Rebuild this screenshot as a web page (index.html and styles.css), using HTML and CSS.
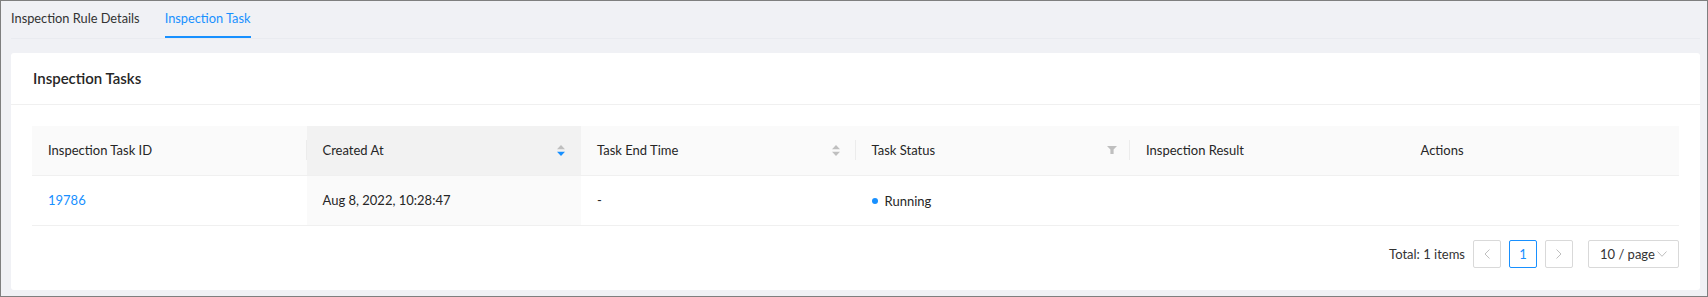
FILE: index.html
```html
<!DOCTYPE html>
<html lang="en">
<head>
  <meta charset="UTF-8" />
  <meta name="viewport" content="width=device-width, initial-scale=1.0" />
  <title>Inspection Task</title>
  <link rel="stylesheet" href="styles.css">
</head>
<body>
<div class="frame">
  <div class="tabs">
    <div class="tab">Inspection Rule Details</div>
    <div class="tab active">Inspection Task</div>
  </div>
  <div class="card">
    <div class="card-head">Inspection Tasks</div>
    <div class="card-body">
      <table class="table">
        <thead>
          <tr>
            <th class="sep">Inspection Task ID</th>
            <th class="sorted">
              <div class="th-inner">
                <span>Created At</span>
                <svg class="sorter" width="8" height="11" viewBox="0 0 8 11"><path d="M0 4.2 4 0 8 4.2Z" fill="#bfbfbf"/><path d="M0 6.8 8 6.8 4 11Z" fill="#1890ff"/></svg>
              </div>
            </th>
            <th class="sep">
              <div class="th-inner">
                <span>Task End Time</span>
                <svg class="sorter" width="8" height="11" viewBox="0 0 8 11"><path d="M0 4.2 4 0 8 4.2Z" fill="#bfbfbf"/><path d="M0 6.8 8 6.8 4 11Z" fill="#bfbfbf"/></svg>
              </div>
            </th>
            <th class="sep">
              <div class="th-inner">
                <span>Task Status</span>
                <svg class="filter" width="10" height="8" viewBox="0 0 10 8"><path d="M0 0H10L6.6 3.6V8H3.4V3.6Z" fill="#bfbfbf"/></svg>
              </div>
            </th>
            <th>Inspection Result</th>
            <th>Actions</th>
          </tr>
        </thead>
        <tbody>
          <tr>
            <td><a class="link" href="#">19786</a></td>
            <td class="sorted">Aug 8, 2022, 10:28:47</td>
            <td>-</td>
            <td><span class="status"><span class="dot"></span>Running</span></td>
            <td></td>
            <td></td>
          </tr>
        </tbody>
      </table>
      <div class="pagination">
        <span class="total">Total: 1 items</span>
        <button class="page-btn disabled">
          <svg width="6" height="10" viewBox="0 0 6 10"><path d="M5.5 0.5 1 5 5.5 9.5" fill="none" stroke="#bfbfbf" stroke-width="1"/></svg>
        </button>
        <button class="page-btn current">1</button>
        <button class="page-btn disabled">
          <svg width="6" height="10" viewBox="0 0 6 10"><path d="M0.5 0.5 5 5 0.5 9.5" fill="none" stroke="#bfbfbf" stroke-width="1"/></svg>
        </button>
        <div class="size-select">
          <span>10 / page</span>
          <svg width="10" height="6" viewBox="0 0 10 6"><path d="M0.5 0.5 5 5.3 9.5 0.5" fill="none" stroke="#bfbfbf" stroke-width="1"/></svg>
        </div>
      </div>
    </div>
  </div>
</div>
</body>
</html>
```

FILE: styles.css
```css
* { box-sizing: border-box; }
body { margin: 0; font-family: Lato, 'Noto Sans', sans-serif; font-size: 13px; color: rgba(0,0,0,.85); background: #fff; }

.frame { height: 297px; border: 1px solid #7f7f7f; background: #f0f1f5; padding: 0 7px 0 10px; }

.tabs { display: flex; gap: 25px; border-bottom: 1px solid #e9ebf0; }
.tab { height: 37px; line-height: 34px; border-bottom: 2px solid transparent; color: #333; font-size: 12.8px; }
.tab.active { color: #1890ff; border-bottom-color: #1890ff; }

.card { margin-top: 14px; background: #fff; border-radius: 3px; }
.card-head { height: 52px; line-height: 51px; padding: 0 22px; border-bottom: 1px solid #f0f0f0; font-size: 15px; font-weight: 600; color: #262626; }
.card-body { padding: 21px 21px 22px; }

.table { width: 100%; border-collapse: collapse; table-layout: fixed; }
.table th, .table td { text-align: left; padding: 0 16px; border-bottom: 1px solid #f0f0f0; }
.table th { height: 49px; background: #fafafa; font-weight: 400; color: #262626; position: relative; }
.table td { height: 50px; color: #262626; }
.table th.sorted { background: #f2f2f2; }
.table td.sorted { background: #fafafa; }
.table th.sep::before { content: ""; position: absolute; right: 0; top: 14px; width: 1px; height: 20px; background: #ececec; }

.th-inner { display: flex; align-items: center; justify-content: space-between; }
.sorter { display: block; }
.filter { display: block; margin-right: -3px; }

.link { color: #1890ff; text-decoration: none; }
.status { display: inline-flex; align-items: center; gap: 7px; }
.dot { width: 6px; height: 6px; border-radius: 50%; background: #1890ff; }

.pagination { margin-top: 14px; display: flex; justify-content: flex-end; align-items: center; gap: 8px; }
.total { color: #333; }
.page-btn { width: 28px; height: 28px; padding: 0; display: flex; align-items: center; justify-content: center; background: #fff; border: 1px solid #d9d9d9; border-radius: 2px; font-family: inherit; font-size: 13px; color: #333; }
.page-btn.current { border-color: #1890ff; color: #1890ff; }
.size-select { margin-left: 7px; width: 91px; height: 28px; padding: 0 11px; display: flex; align-items: center; justify-content: space-between; border: 1px solid #d9d9d9; border-radius: 2px; color: #333; }
```
